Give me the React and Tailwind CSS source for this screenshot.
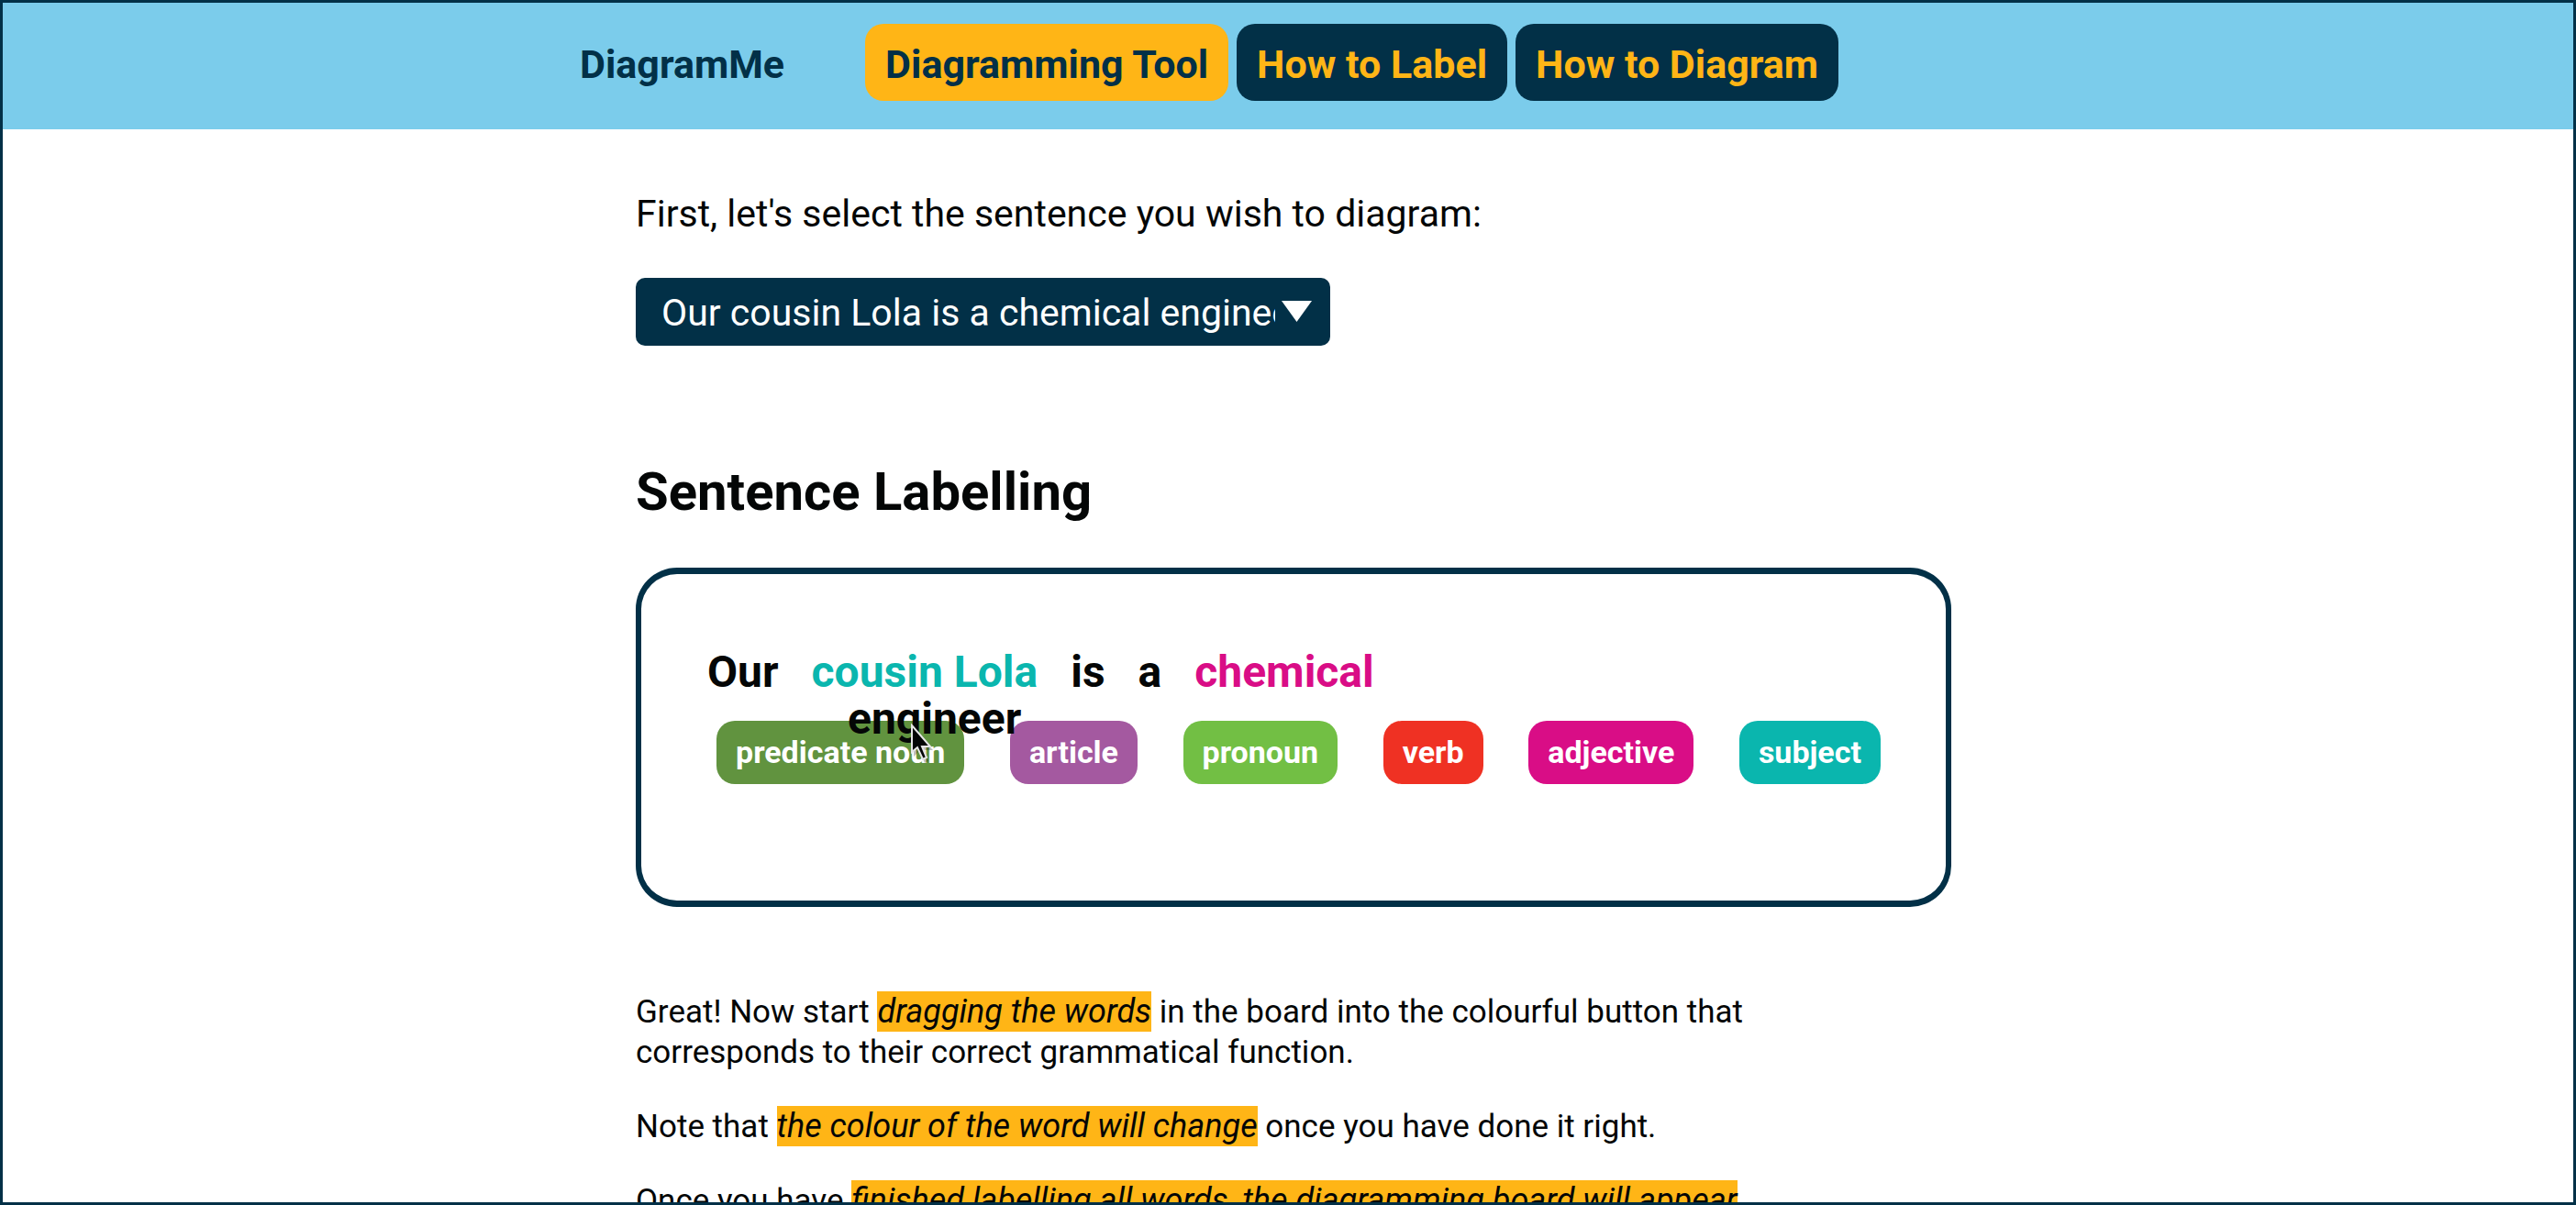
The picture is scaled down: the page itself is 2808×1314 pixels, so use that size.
import React from "react";

const tabs = [
  { label: "Diagramming Tool", style: "bg-[#ffb516] text-[#023047]", current: "page" },
  { label: "How to Label", style: "bg-[#023047] text-[#ffb516]" },
  { label: "How to Diagram", style: "bg-[#023047] text-[#ffb516]" },
];

const words = [
  { text: "Our", color: "text-[#040606]" },
  { text: "cousin Lola", color: "text-[#0ab6ae]" },
  { text: "is", color: "text-[#040606]" },
  { text: "a", color: "text-[#040606]" },
  { text: "chemical", color: "text-[#d90d86]" },
];

const labels = [
  { text: "predicate noun", color: "bg-[#61933f]" },
  { text: "article", color: "bg-[#a459a0]" },
  { text: "pronoun", color: "bg-[#72bf44]" },
  { text: "verb", color: "bg-[#ef3123]" },
  { text: "adjective", color: "bg-[#d90d86]" },
  { text: "subject", color: "bg-[#0ab6ae]" },
];

const Mark = ({ children }) => (
  <mark className="bg-[#ffb516] py-px text-[36px] italic text-[#040606]">{children}</mark>
);

function Header() {
  return (
    <header className="bg-[#7bcceb]">
      <div className="mx-auto flex max-w-[1544px] items-start pt-[23px] pb-[31px] text-[43px] leading-[80px] font-bold">
        <a href="#home" className="mr-[88px] pt-1 text-[#023047]">DiagramMe</a>
        <nav className="flex gap-[9px]">
          {tabs.map((t) => (
            <a key={t.label} href="#tab" aria-current={t.current} className={`rounded-[20px] px-[22px] pt-1 whitespace-nowrap ${t.style}`}>
              {t.label}
            </a>
          ))}
        </nav>
      </div>
    </header>
  );
}

function SentencePicker() {
  return (
    <section>
      <label htmlFor="sentence" className="block text-[41px] leading-[48px]">
        First, let's select the sentence you wish to diagram:
      </label>
      <div className="relative mt-[46px] max-w-[757px]">
        <select
          id="sentence"
          className="block h-[74px] w-full appearance-none rounded-[10px] bg-[#023047] pt-1 pr-[60px] pl-7 text-[41px] text-white"
        >
          <option>Our cousin Lola is a chemical engineer</option>
        </select>
        <svg className="pointer-events-none absolute top-[25px] right-5 h-[23px] w-[33px]" viewBox="0 0 33 23" fill="#fff" aria-hidden="true">
          <path d="M0 0H33L16.5 23Z" />
        </svg>
      </div>
    </section>
  );
}

function Board() {
  return (
    <div className="relative mt-[49px] rounded-[45px] border-x-[6px] border-y-[7px] border-[#023047] pt-[79px] pr-[71px] pb-[127px] pl-[72px]">
      <div className="flex gap-9 text-[48px] leading-[56px] font-bold">
        {words.map((w) => (
          <span key={w.text} draggable className={w.color}>{w.text}</span>
        ))}
      </div>
      <div className="mt-[25px] ml-[10px] flex justify-between text-[34px] leading-[69px] font-bold text-white">
        {labels.map((l) => (
          <button key={l.text} type="button" className={`rounded-[20px] px-[21px] whitespace-nowrap ${l.color}`}>
            {l.text}
          </button>
        ))}
      </div>
      <span draggable className="absolute top-[130px] left-[225px] text-[48px] leading-[56px] font-bold text-[#040606]">engineer</span>
      <svg className="absolute top-[163px] left-[293px] h-[50px] w-[30px]" viewBox="0 0 30 50" aria-hidden="true">
        <path d="M4 7V36L10 30L16 43L20 41L16 29H25Z" fill="#000" opacity=".25" />
        <path d="M2 2V31L8 26L14 39L18 37L13 25H22Z" fill="#040606" stroke="#e6e6e6" strokeWidth="2" />
      </svg>
    </div>
  );
}

export default function App() {
  return (
    <div className="h-screen overflow-hidden border-[3px] border-[#023047] bg-white font-['Roboto',sans-serif] text-[#040606]">
      <Header />
      <main className="mx-auto max-w-[1446px] pt-[68px] pl-3">
        <SentencePicker />
        <h2 className="mt-[125px] text-[58px] leading-[68px] font-bold">Sentence Labelling</h2>
        <Board />
        <div className="mt-[92px] flex max-w-[1290px] flex-col gap-9 text-[35px] leading-[44px]">
          <p>
            Great! Now start <Mark>dragging the words</Mark> in the board into the colourful button that corresponds to their correct grammatical function.
          </p>
          <p>
            Note that <Mark>the colour of the word will change</Mark> once you have done it right.
          </p>
          <p>
            Once you have <Mark>finished labelling all words, the diagramming board will appear</Mark>
          </p>
        </div>
      </main>
    </div>
  );
}
